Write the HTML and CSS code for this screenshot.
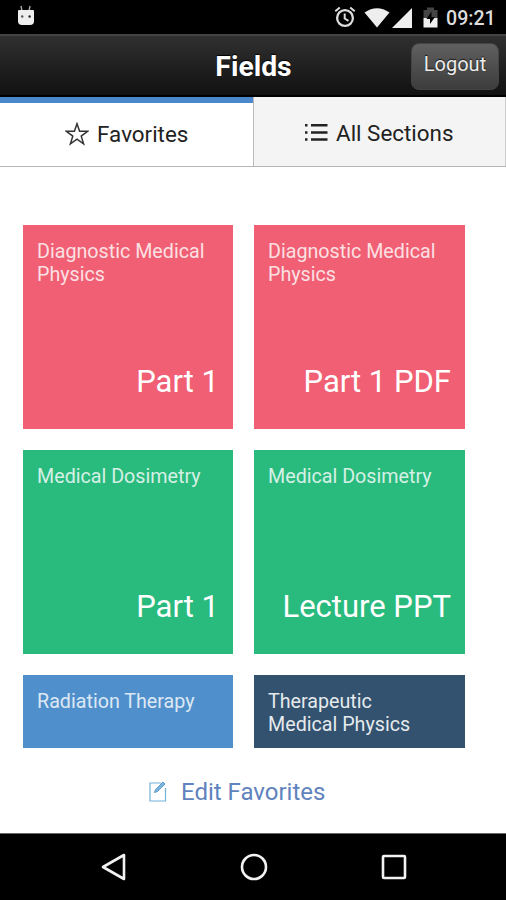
FILE: index.html
```
<!DOCTYPE html>
<html lang="en">
<head>
    <meta charset="UTF-8">
    <meta name="viewport" content="width=device-width, initial-scale=1.0">
    <title>Fields</title>
    <link rel="stylesheet" href="styles.css">
</head>
<body>
    <div class="status-bar">
        <svg class="debug-icon" width="18" height="22" viewBox="0 0 18 22">
            <path d="M4 1l1 5M13 1l-1 5" stroke="#aaa" stroke-width="1.4"/>
            <path d="M1 6q0-1 1-1h14q1 0 1 1v10q0 4-4 4H5q-4 0-4-4z" fill="#eee"/>
            <circle cx="5.2" cy="11.5" r="1.2" fill="#555"/>
            <circle cx="12.6" cy="11.5" r="1.2" fill="#222"/>
        </svg>
        <div class="status-icons">
            <svg width="22" height="22" viewBox="0 0 22 22" fill="none" stroke="#ddd">
                <circle cx="11" cy="12" r="7.900" stroke-width="2.300"/>
                <path d="M1.300 5.300l4.500-3.800M20.700 5.300l-4.500-3.800" stroke-width="2"/>
                <path d="M10.700 7.500v5l3.800 2.300" stroke-width="2"/>
            </svg>
            <svg class="wifi" width="26" height="20" viewBox="0 0 26 20">
                <path d="M.5 4.500Q13-4 25.500 4.500L13 19.500z" fill="#eee"/>
            </svg>
            <svg class="signal" width="20" height="20" viewBox="0 0 20 20">
                <path d="M0 20L20 0v20z" fill="#eee"/>
            </svg>
            <svg class="battery" width="15" height="21" viewBox="0 0 15 21">
                <path d="M.5 3H4V.5h7V3h3.500v8H.5z" fill="#444"/>
                <path d="M.5 11h14v9.500H.5z" fill="#eee"/>
                <path d="M8.500 4.500L3.500 12h3.500v5l5-7H8.500z" fill="#000"/>
            </svg>
            <span class="clock">09:21</span>
        </div>
    </div>

    <header class="header">
        <h1>Fields</h1>
        <button class="logout">Logout</button>
    </header>

    <nav class="tabs">
        <a class="tab active">
            <svg width="24" height="24" viewBox="0 0 24 24">
                <path d="M12 1.700l2.600 7.600h8l-6.400 4.800 2.400 7.700-6.600-4.700-6.600 4.700 2.400-7.700-6.400-4.800h8z" fill="none" stroke="#333" stroke-width="1.500"/>
            </svg>
            <span>Favorites</span>
        </a>
        <a class="tab">
            <svg width="23" height="20" viewBox="0 0 23 20" fill="#222">
                <path d="M0 1h2.500v2.500H0zM6 1h16.500v2.500H6zM0 8.200h2.500v2.500H0zM6 8.200h16.500v2.500H6zM0 15.200h2.500v2.500H0zM6 15.200h16.500v2.500H6z"/>
            </svg>
            <span>All Sections</span>
        </a>
    </nav>

    <main class="content">
        <div class="tiles">
            <div class="tile red"><p>Diagnostic Medical Physics</p><h2>Part 1</h2></div>
            <div class="tile red"><p>Diagnostic Medical Physics</p><h2>Part 1 PDF</h2></div>
            <div class="tile green"><p>Medical Dosimetry</p><h2>Part 1</h2></div>
            <div class="tile green"><p>Medical Dosimetry</p><h2>Lecture PPT</h2></div>
            <div class="tile blue"><p>Radiation Therapy</p></div>
            <div class="tile navy"><p>Therapeutic Medical Physics</p></div>
        </div>
        <a class="edit">
            <svg width="18" height="21" viewBox="0 0 18 21" fill="none">
                <path d="M12 2H1v18h15.500V7" stroke="#72b4d8" stroke-width="1.200"/>
                <path d="M5.500 11.500l1-3L14 1l2 2-7.500 7.500z" fill="#7fb5dc" stroke="#5a9dcc"/>
            </svg>
            <span>Edit Favorites</span>
        </a>
    </main>

    <footer class="nav-bar">
        <svg width="26" height="30" viewBox="0 0 26 30"><path d="M3 15L24 3v24z"/></svg>
        <svg width="30" height="30" viewBox="0 0 30 30"><circle cx="15" cy="15" r="12"/></svg>
        <svg width="26" height="30" viewBox="0 0 26 30"><rect x="2" y="4" width="22" height="22" rx="1"/></svg>
    </footer>
</body>
</html>
```
FILE: styles.css
```
* {
    box-sizing: border-box;
}

body {
    margin: 0;
    height: 900px;
    display: flex;
    flex-direction: column;
    font-family: Roboto, sans-serif;
    background: #fff;
    overflow: hidden;
}

svg {
    display: block;
    flex: none;
}

h1, h2, p {
    margin: 0;
}

.status-bar {
    height: 34px;
    background: #000;
    display: flex;
    justify-content: space-between;
    padding: 5px 9px 0 17px;
}

.status-icons {
    display: flex;
    align-items: flex-start;
    padding-top: 1px;
}

.wifi {
    margin: 2px 0 0 8px;
}

.signal {
    margin: 2px 0 0 2px;
}

.battery {
    margin: 1px 0 0 11px;
}

.clock {
    margin-left: 8px;
    width: 51px;
    color: #ddd;
    font-size: 19.6px;
    font-weight: 500;
    line-height: 25px;
    white-space: nowrap;
}

.header {
    height: 63px;
    background: linear-gradient(#303030, #111);
    border-top: 2px solid #444;
    border-bottom: 2px solid #000;
    display: grid;
    grid-template-columns: 1fr auto 1fr;
    align-items: center;
    padding: 0 7px 0 8px;
}

.header h1 {
    grid-column: 2;
    color: #fff;
    font-size: 28.3px;
    font-weight: 700;
    line-height: 34px;
    margin-top: 3px;
    text-shadow: 0 -1px 1px #000;
}

.logout {
    justify-self: end;
    width: 88px;
    height: 47px;
    margin-top: 2px;
    padding: 0 0 5px;
    border: 1px solid #444;
    border-radius: 8px;
    background: linear-gradient(#606060, #3c3c3c);
    color: #eee;
    font: 20px Roboto, sans-serif;
    text-shadow: 0 -1px 1px #111;
}

.tabs {
    height: 70px;
    display: flex;
    border-bottom: 1px solid #b5b5b5;
}

.tab {
    flex: 1;
    display: flex;
    align-items: center;
    justify-content: center;
    gap: 8px;
    padding-top: 3px;
    background: #f4f4f4;
    border-left: 1px solid #bbb;
    border-right: 1px solid #ccc;
    color: #222;
    font-size: 22.4px;
}

.tab.active {
    background: #fff;
    border: 0;
    border-top: 6px solid #4a87cb;
    padding: 0 0 2px 1px;
}

.content {
    flex: 1;
    padding: 58px 41px 0 23px;
}

.tiles {
    display: grid;
    grid-template-columns: 210px 211px;
    grid-template-rows: 204px 204px 73px;
    gap: 21px;
}

.tile {
    display: flex;
    flex-direction: column;
    justify-content: space-between;
    padding: 15px 14px 29px;
    color: #fff;
}

.tile p {
    font-size: 19.7px;
    line-height: 23px;
    opacity: 0.8;
}

.tile h2 {
    font-size: 31px;
    font-weight: 400;
    line-height: 36px;
    text-align: right;
}

.red {
    background: #f05f73;
}

.green {
    background: #29ba7e;
}

.blue {
    background: #4f8fcb;
}

.navy {
    background: #32526f;
}

.navy p {
    width: 150px;
    opacity: 0.88;
}

.edit {
    display: flex;
    align-items: center;
    gap: 14px;
    margin: 30px 0 0 126px;
    color: #5f83bd;
    font-size: 24px;
    line-height: 28px;
}

.edit svg {
    margin-top: -2px;
}

.nav-bar {
    height: 67px;
    background: #000;
    border-top: 1px solid #666;
    display: flex;
    align-items: center;
    justify-content: space-between;
    padding: 0 99px 0 100px;
}

.nav-bar svg {
    fill: none;
    stroke: #f2f2f2;
    stroke-width: 2.6;
    stroke-linejoin: round;
}
```
